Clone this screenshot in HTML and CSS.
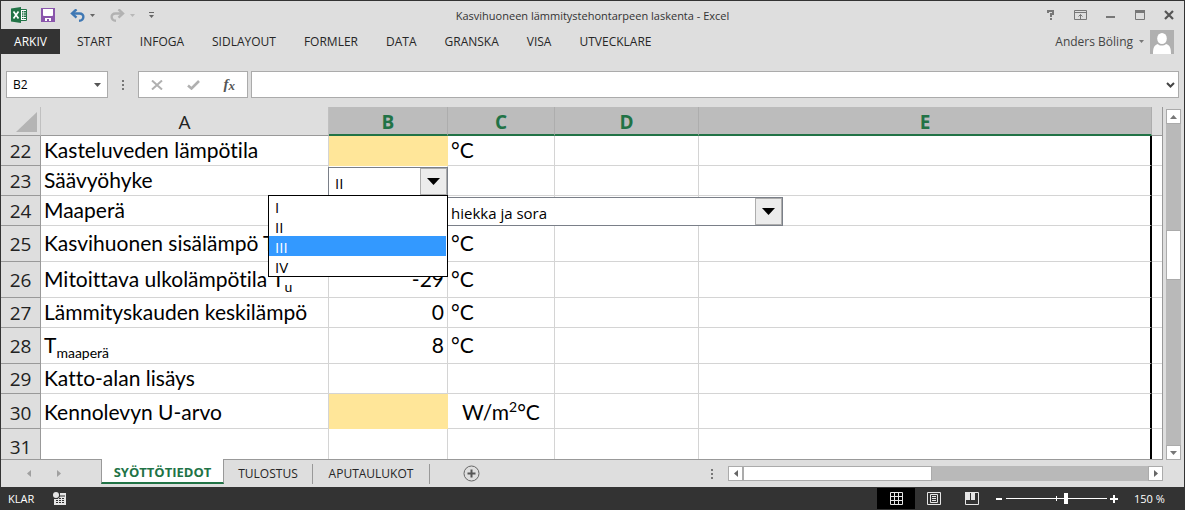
FILE: index.html
```html
<!DOCTYPE html>
<html lang="sv">
<head>
<meta charset="utf-8">
<title>Kasvihuoneen lämmitystehontarpeen laskenta - Excel</title>
<link rel="stylesheet" href="styles.css">
</head>
<body>
<div class="window">
  <header class="titlebar">
    <div class="quick">
      <svg class="logo" width="16" height="16" viewBox="0 0 16 16" aria-hidden="true"><path fill="#fff" stroke="#217346" d="M8.500 2.500h7v11h-7z"/><path fill="#217346" d="M0 1.500 10 0v16L0 14.500zM11 4h1.500v1.500H11zM13 4h2v1.500h-2zM11 6.300h1.500v1.500H11zM13 6.300h2v1.500h-2zM11 8.600h1.500v1.500H11zM13 8.600h2v1.500h-2zM11 10.900h1.500v1.200H11zM13 10.900h2v1.200h-2z"/><path stroke="#fff" stroke-width="1.700" d="m2.500 4.500 5 7m0-7-5 7"/></svg>
      <button class="save" aria-label="Spara"><svg width="14" height="14" viewBox="0 0 14 14"><path fill="#8a56ac" d="M0 0h14v14H0z"/><path fill="#fff" d="M2 1h10v6.500l-1 .5H3l-1-.5zM4 10h6v3H8v-2H6v2H4z"/></svg></button>
      <button class="undo" aria-label="Ångra"><svg width="15" height="13" viewBox="0 0 15 13"><path fill="none" stroke="#3f78b4" stroke-width="2.400" d="M2 4.500h7.500c5.500 0 5 7-.5 7.300"/><path fill="none" stroke="#3f78b4" stroke-width="2.400" d="M6.500.3 2 4.500l4.500 4.200"/></svg><svg width="5" height="3" viewBox="0 0 5 3"><path fill="#666" d="M0 0h5L2.500 3z"/></svg></button>
      <button class="redo" aria-label="Gör om"><svg width="15" height="13" viewBox="0 0 15 13"><path fill="none" stroke="#b2b2b2" stroke-width="2.400" d="M13 4.500H5.500c-5.500 0-5 7 .5 7.300"/><path fill="none" stroke="#b2b2b2" stroke-width="2.400" d="M8.500.3 13 4.500 8.500 8.700"/></svg><svg width="5" height="3" viewBox="0 0 5 3"><path fill="#b8b8b8" d="M0 0h5L2.500 3z"/></svg></button>
      <button class="more" aria-label="Anpassa"><svg width="5" height="6" viewBox="0 0 5 6"><path fill="#666" d="M0 0h5v1H0zM0 3h5L2.500 6z"/></svg></button>
    </div>
    <h1 class="title">Kasvihuoneen lämmitystehontarpeen laskenta - Excel</h1>
    <div class="winbtns">
      <button class="help" aria-label="Hjälp"><svg width="8" height="10" viewBox="0 0 8 10"><path fill="none" stroke="#777" stroke-width="2" d="M1 3V1h5v3H4v3"/><path fill="#777" d="M3 8h2v2H3z"/></svg></button>
      <button aria-label="Menyfliksalternativ"><svg width="13" height="10" viewBox="0 0 13 10"><path fill="none" stroke="#777" d="M.5.5h12v9H.5zM.5 2.500h12M6.500 9V4.500M4.500 6.500l2-2 2 2"/></svg></button>
      <button aria-label="Minimera"><svg width="10" height="10" viewBox="0 0 10 10"><path fill="#777" d="M0 6h9v2H0z"/></svg></button>
      <button aria-label="Maximera"><svg width="10" height="10" viewBox="0 0 10 10"><path fill="none" stroke="#777" d="M.5.5h9v9H.5z"/><path fill="#777" d="M0 0h10v3H0z"/></svg></button>
      <button aria-label="Stäng"><svg width="10" height="10" viewBox="0 0 10 10"><path stroke="#555" stroke-width="2.200" d="m1 1 8 8M9 1 1 9"/></svg></button>
    </div>
  </header>
  <nav class="ribbon">
    <button class="file">ARKIV</button>
    <div class="tabs">
      <button>START</button><button>INFOGA</button><button>SIDLAYOUT</button><button>FORMLER</button><button>DATA</button><button>GRANSKA</button><button>VISA</button><button>UTVECKLARE</button>
    </div>
    <button class="account">Anders Böling
      <svg width="5" height="3" viewBox="0 0 5 3"><path fill="#777" d="M0 0h5L2.500 3z"/></svg>
      <svg width="24" height="24" viewBox="0 0 24 24"><path fill="#b0b0b0" d="M0 0h24v24H0z"/><path fill="#fff" d="M3 24c0-6 1-9 5-10 1 2 6 2 8 0 4 1 5 4 5 10z"/><ellipse cx="12" cy="8.500" rx="4.800" ry="5.600" fill="#fff"/></svg>
    </button>
  </nav>
  <div class="formulabar">
    <label class="namebox"><input value="B2" aria-label="Namnruta"><svg width="7" height="4" viewBox="0 0 7 4"><path fill="#555" d="M0 0h7L3.500 4z"/></svg></label>
    <svg class="grip" width="3" height="10" viewBox="0 0 3 10"><path fill="#777" d="M0 0h2v2H0zM0 4h2v2H0zM0 8h2v2H0z"/></svg>
    <div class="fxbox">
      <button aria-label="Avbryt"><svg width="12" height="10" viewBox="0 0 12 10"><path stroke="#b0b0b0" stroke-width="2" d="m1 .5 10 9M11 .5l-10 9"/></svg></button>
      <button aria-label="Ange"><svg width="13" height="10" viewBox="0 0 13 10"><path fill="none" stroke="#b0b0b0" stroke-width="2.600" d="m1 5.500 3.500 3L12 1"/></svg></button>
      <button class="fx" aria-label="Infoga funktion"><i>f</i><i class="x">x</i></button>
    </div>
    <label class="formula"><input aria-label="Formelfält"><svg width="9" height="6" viewBox="0 0 9 6"><path fill="none" stroke="#444" stroke-width="2" d="m1 1 3.500 3.500L8 1"/></svg></label>
  </div>
  <main class="work">
    <div class="sheet">
      <table class="grid">
        <colgroup><col class="c-row"><col class="c-a"><col class="c-b"><col class="c-c"><col class="c-d"><col><col class="c-end"></colgroup>
        <thead>
          <tr><th class="corner"><svg width="21" height="20" viewBox="0 0 21 20"><path fill="#b4b4b4" d="M21 0v20H0z"/></svg></th><th>A</th><th class="sel">B</th><th class="sel">C</th><th class="sel">D</th><th class="sel">E</th><th></th></tr>
        </thead>
        <tbody>
          <tr><th>22</th><td>Kasteluveden lämpötila</td><td class="input"></td><td>°C</td><td></td><td class="edge"></td><td></td></tr>
          <tr><th>23</th><td>Säävyöhyke</td>
            <td class="host">
              <div class="combo zone"><select aria-label="Säävyöhyke"><option>I</option><option selected>II</option><option>III</option><option>IV</option></select><span class="drop"><svg width="13" height="7" viewBox="0 0 13 7"><path d="M0 0h13L6.500 7z"/></svg></span></div>
              <ul class="list" role="listbox" aria-label="Säävyöhyke"><li role="option">I</li><li role="option">II</li><li role="option" aria-selected="true" class="on">III</li><li role="option">IV</li></ul>
            </td><td></td><td></td><td class="edge"></td><td></td></tr>
          <tr><th>24</th><td>Maaperä</td><td></td>
            <td class="host"><div class="combo soil"><select aria-label="Maaperä"><option>hiekka ja sora</option></select><span class="drop"><svg width="13" height="7" viewBox="0 0 13 7"><path d="M0 0h13L6.500 7z"/></svg></span></div></td><td></td><td class="edge"></td><td></td></tr>
          <tr class="tall"><th>25</th><td>Kasvihuonen sisälämpö T<sub>s</sub></td><td></td><td>°C</td><td></td><td class="edge"></td><td></td></tr>
          <tr class="tall"><th>26</th><td>Mitoittava ulkolämpötila T<sub>u</sub></td><td class="num">-29</td><td>°C</td><td></td><td class="edge"></td><td></td></tr>
          <tr><th>27</th><td>Lämmityskauden keskilämpö</td><td class="num">0</td><td>°C</td><td></td><td class="edge"></td><td></td></tr>
          <tr class="tall"><th>28</th><td>T<sub>maaperä</sub></td><td class="num">8</td><td>°C</td><td></td><td class="edge"></td><td></td></tr>
          <tr><th>29</th><td>Katto-alan lisäys</td><td></td><td></td><td></td><td class="edge"></td><td></td></tr>
          <tr class="raised"><th>30</th><td>Kennolevyn U-arvo</td><td class="input"></td><td class="mid">W/m<sup>2</sup>°C</td><td></td><td class="edge"></td><td></td></tr>
          <tr class="tall"><th>31</th><td></td><td></td><td></td><td></td><td class="edge"></td><td></td></tr>
        </tbody>
      </table>
    </div>
    <div class="vscroll">
      <button aria-label="Uppåt"><svg width="7" height="4" viewBox="0 0 7 4"><path fill="#777" d="M0 4h7L3.500 0z"/></svg></button>
      <div class="vtrack"><div class="vthumb"></div></div>
      <button aria-label="Nedåt"><svg width="7" height="4" viewBox="0 0 7 4"><path fill="#777" d="M0 0h7L3.500 4z"/></svg></button>
    </div>
  </main>
  <div class="bottom">
    <div class="arrows">
      <button aria-label="Föregående blad"><svg width="4" height="7" viewBox="0 0 4 7"><path fill="#a0a0a0" d="M4 0v7L0 3.500z"/></svg></button>
      <button aria-label="Nästa blad"><svg width="4" height="7" viewBox="0 0 4 7"><path fill="#a0a0a0" d="M0 0v7l4-3.500z"/></svg></button>
    </div>
    <button class="tab active">SYÖTTÖTIEDOT</button>
    <button class="tab">TULOSTUS</button>
    <button class="tab wide">APUTAULUKOT</button>
    <button class="add" aria-label="Nytt blad"><svg width="17" height="17" viewBox="0 0 17 17"><circle cx="8.500" cy="8.500" r="7.500" fill="none" stroke="#666"/><path stroke="#555" stroke-width="2" d="M8.500 4.500v8M4.500 8.500h8"/></svg></button>
    <svg class="grip" width="3" height="10" viewBox="0 0 3 10"><path fill="#777" d="M0 0h2v2H0zM0 4h2v2H0zM0 8h2v2H0z"/></svg>
    <div class="hscroll">
      <button aria-label="Vänster"><svg width="4" height="7" viewBox="0 0 4 7"><path fill="#666" d="M4 0v7L0 3.500z"/></svg></button>
      <div class="htrack"><div class="hthumb"></div></div>
      <button aria-label="Höger"><svg width="4" height="7" viewBox="0 0 4 7"><path fill="#666" d="M0 0v7l4-3.500z"/></svg></button>
    </div>
  </div>
  <footer class="status">
    <span class="ready">KLAR</span>
    <svg width="13" height="13" viewBox="0 0 13 13" aria-hidden="true"><circle cx="3" cy="3" r="3" fill="#e6e6e6"/><path fill="#e6e6e6" d="M7 1h6v12H1V7h3.500L7 5z"/><path fill="#333" d="M6 3.500h6v1H6zM3 6h2v1H3zM6 6h2v1H6zM9 6h2v1H9zM3 8h2v1H3zM6 8h2v1H6zM9 8h2v1H9zM3 10h2v1H3zM6 10h2v1H6zM9 10h2v1H9z"/></svg>
    <div class="views">
      <button class="current" aria-label="Normal"><svg width="13" height="13" viewBox="0 0 13 13"><path fill="none" stroke="#e6e6e6" d="M.5.5h12v12H.5zM4.500 0v13M8.500 0v13M0 4.500h13M0 8.500h13"/></svg></button>
      <button aria-label="Sidlayout"><svg width="14" height="13" viewBox="0 0 14 13"><path fill="none" stroke="#e6e6e6" d="M.5.5h13v12H.5zM3.500 2.500h7v8h-7zM5 4.500h4M5 6.500h4M5 8.500h4"/></svg></button>
      <button aria-label="Sidbrytningar"><svg width="14" height="13" viewBox="0 0 14 13"><path fill="none" stroke="#e6e6e6" d="M.5.500h13v12H.5z"/><path fill="#e6e6e6" d="M0 0h5v8H0zM6 0h4v8H6z"/></svg></button>
    </div>
    <div class="zoom">
      <button aria-label="Zooma ut"><svg width="7" height="8" viewBox="0 0 7 8"><path fill="#fff" d="M0 3h6v2H0z"/></svg></button>
      <input type="range" min="0" max="100" value="60" aria-label="Zoom">
      <button aria-label="Zooma in"><svg width="8" height="8" viewBox="0 0 8 8"><path fill="#fff" d="M0 3h3V0h2v3h3v2H5v3H3V5H0z"/></svg></button>
    </div>
    <span class="percent">150 %</span>
  </footer>
</div>
</body>
</html>
```
FILE: styles.css
```css
* { box-sizing: border-box; }
body { margin: 0; font-family: "Open Sans", "Noto Sans", sans-serif; font-size: 12px; color: #262626; }
button { display: flex; align-items: center; padding: 0; border: 0; background: none; font: inherit; color: inherit; white-space: nowrap; }
input, select { font: inherit; color: inherit; border: 0; outline: 0; padding: 0; background: none; min-width: 0; }
svg { display: block; flex: none; }

.window { height: 100vh; display: flex; flex-direction: column; background: #dedede; border: 1px solid #333; border-bottom: 0; overflow: hidden; }

.titlebar { display: grid; grid-template-columns: 1fr auto 1fr; align-items: center; height: 28px; flex: none; }
.quick { display: flex; align-items: center; padding-left: 10px; }
.save { margin-left: 14px; }
.undo, .redo { gap: 5px; margin-left: 15px; }
.more { margin-left: 14px; }
.title { margin: 0; font-size: 11px; font-weight: 400; color: #333; }
.winbtns { display: flex; align-items: center; justify-content: flex-end; gap: 19px; padding-right: 10px; }

.ribbon { display: flex; align-items: center; height: 25px; flex: none; }
.file { align-self: stretch; width: 59px; justify-content: center; background: #333; color: #fff; }
.tabs { display: flex; gap: 28px; margin-left: 17px; }
.account { margin-left: auto; gap: 6px; padding-right: 10px; color: #444; }

.formulabar { display: flex; align-items: center; height: 27px; flex: none; margin: 17px 5px 9px; }
.namebox, .fxbox, .formula { display: flex; align-items: center; height: 27px; background: #fff; border: 1px solid #ababab; }
.namebox { width: 102px; padding: 0 6px; color: #000; }
.namebox input, .formula input { flex: 1; }
.formulabar .grip { margin: 0 13px 0 14px; }
.fxbox { width: 110px; justify-content: space-between; padding: 0 12px; }
.fx { font: bold 15px "Liberation Serif", serif; color: #555; }
.fx .x { font-size: 13px; padding-top: 3px; }
.formula { flex: 1; margin-left: 3px; padding: 0 3px; }

.work { flex: 1; min-height: 0; display: flex; }
.sheet { flex: 1; min-width: 0; overflow: hidden; border-right: 1px solid #999; border-bottom: 1px solid #999; }
.grid { width: 100%; table-layout: fixed; border-spacing: 0; background: #fff; color: #000; font-size: 21px; line-height: 24px; }
.c-row { width: 40px; }
.c-a { width: 288px; }
.c-b { width: 119px; }
.c-c { width: 107px; }
.c-d { width: 144px; }
.c-end { width: 10px; }
.grid td, .grid th { height: 30px; padding: 0; border: solid #d4d4d4; border-width: 0 1px 1px 0; white-space: nowrap; font-weight: 400; }
.grid td { padding: 0 3px 2px; font-family: Lato, "Open Sans", sans-serif; font-variant-ligatures: none; }
.grid th { background: #dedede; border-color: #999; color: #222; font-size: 19px; }
.grid thead th { height: 29px; padding-top: 2px; border-right-color: #c0c0c0; }
.grid thead th:last-child { border-right: 0; }
.grid thead .sel { background: #bcbcbc; color: #217346; font-weight: 700; border-bottom: 2px solid #217346; border-right-color: #adadad; }
.grid .corner svg { margin-left: 15px; }
.grid .tall td, .grid .tall th { height: 36px; }
.grid .raised td, .grid .raised th { height: 35px; padding-top: 4px; }
.grid td:last-child { border-right: 0; }
.grid .edge { border-right: 2px solid #000; }
.grid .input { background: #ffe699; border-color: #ffe699; }
.grid .num { text-align: right; }
.grid .mid { text-align: center; }
.grid sub, .grid sup { font-size: 14px; line-height: 0; }

.grid .host { position: relative; font-family: inherit; }
.combo { position: absolute; top: 1px; display: flex; height: 29px; background: #fff; border: 1px solid #7a7f88; font-size: 15px; z-index: 1; }
.combo select { appearance: none; flex: 1; padding: 2px 0 0 6px; }
.zone { left: -1px; right: -1px; }
.soil { left: -4px; width: 339px; }
.drop { display: flex; align-items: center; justify-content: center; width: 27px; background: #ececec; border: 1px solid #adadad; pointer-events: none; }
.list { position: absolute; top: 29px; left: -61px; right: -1px; margin: 0; padding: 0 1px 0 0; list-style: none; background: #fff; border: 1px solid #000; font-size: 15px; line-height: 20px; z-index: 2; }
.list li { height: 20px; padding: 2px 6px 0; line-height: 18px; }
.list .on { background: #3399ff; color: #fff; }

.vscroll { display: flex; flex-direction: column; width: 15px; margin: 2px 3px 0; background: #b9b9b9; }
.vscroll button, .hscroll button { justify-content: center; flex: none; width: 15px; height: 15px; background: #fff; border: 1px solid #ababab; }
.vtrack { flex: 1; display: grid; grid-template-rows: 106fr 50fr 166fr; }
.vthumb { grid-row: 2; background: #fff; border: 1px solid #ababab; }

.bottom { display: flex; align-items: center; height: 27px; flex: none; padding-right: 21px; }
.arrows { display: flex; gap: 26px; width: 100px; padding-left: 26px; }
.tab { height: 20px; justify-content: center; width: 89px; border-right: 1px solid #999; }
.tab.wide { width: 117px; }
.tab.active { position: relative; align-self: flex-start; width: 123px; height: 25px; margin-top: -1px; padding-top: 2px; background: #fff; border: solid #999; border-width: 0 1px; border-bottom: 2px solid #217346; color: #217346; font-size: 13px; font-weight: 700; }
.add { margin-left: 33px; }
.bottom .grip { margin-left: auto; }
.hscroll { display: flex; width: 435px; max-width: 40%; margin-left: 14px; background: #b9b9b9; }
.htrack { flex: 1; display: grid; grid-template-columns: 189fr 216fr; }
.hthumb { background: #fff; border: 1px solid #ababab; }

.status { display: flex; align-items: center; height: 23px; flex: none; padding: 0 19px 0 7px; background: #333; color: #fff; font-size: 11px; }
.ready { width: 45px; }
.views { display: flex; margin-left: auto; }
.views button { width: 38px; height: 21px; justify-content: center; }
.views .current { background: #000; }
.zoom { display: flex; align-items: center; gap: 3px; margin-left: 5px; }
.zoom input { appearance: none; width: 101px; height: 11px; margin: 0; background: linear-gradient(#fff, #fff) 50% 50% / 1px 5px no-repeat, linear-gradient(#fff, #fff) 50% 50% / 100% 1px no-repeat; }
.zoom input::-webkit-slider-thumb { appearance: none; width: 4px; height: 11px; background: #fff; }
.percent { margin-left: 16px; width: 31px; white-space: nowrap; }
```
